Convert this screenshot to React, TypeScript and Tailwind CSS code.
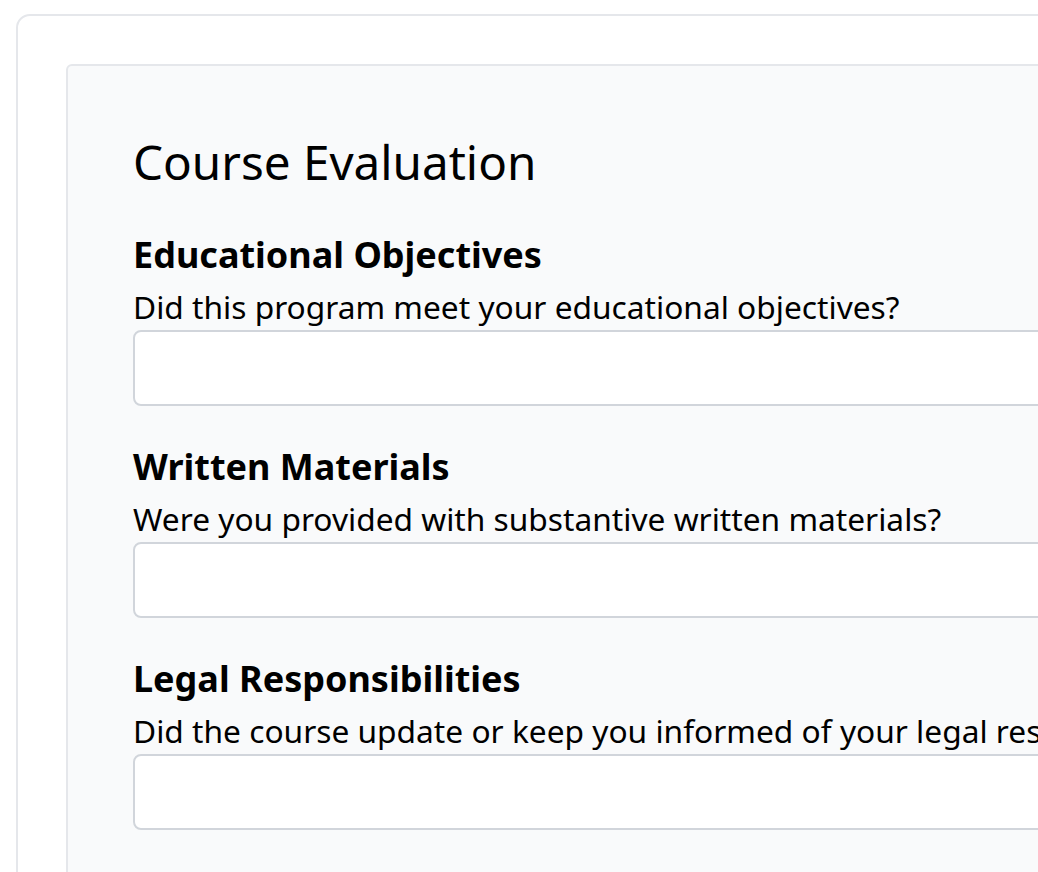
import React from "react";

const sections = [
  {
    title: "Educational Objectives",
    q: "Did this program meet your educational objectives?",
  },
  {
    title: "Written Materials",
    q: "Were you provided with substantive written materials?",
  },
  {
    title: "Legal Responsibilities",
    q: "Did the course update or keep you informed of your legal responsibilities?",
  },
];

export default function App() {
  return (
    <div
      className="w-[1038px] h-[872px] overflow-hidden bg-white pl-[16px] pt-[14px] text-black"
      style={{ fontFamily: '"Noto Sans", "Open Sans", sans-serif' }}
    >
      <div className="w-[1400px] h-[1200px] border-2 border-[#e5e7eb] rounded-[14px] pl-[48px] pt-[48px] bg-white">
        <div className="h-[1100px] border-2 border-[#e5e7eb] rounded-[6px] bg-[#f9fafb] pl-[65px] pr-[65px] pt-[72px]">
          <h1 className="text-[47.6px] leading-[48px] font-normal">Course Evaluation</h1>
          <div className="mt-[47px] flex flex-col gap-[39px]">
            {sections.map((s) => (
              <div key={s.title} className="flex flex-col">
                <h2 className="text-[36px] leading-[44px] font-bold">{s.title}</h2>
                <p className="mt-[10px] text-[31.7px] leading-[40px] whitespace-nowrap">{s.q}</p>
                <input
                  type="text"
                  className="mt-[3px] h-[76px] w-full rounded-[8px] border-2 border-[#d1d5db] bg-white outline-none"
                />
              </div>
            ))}
          </div>
        </div>
      </div>
    </div>
  );
}
